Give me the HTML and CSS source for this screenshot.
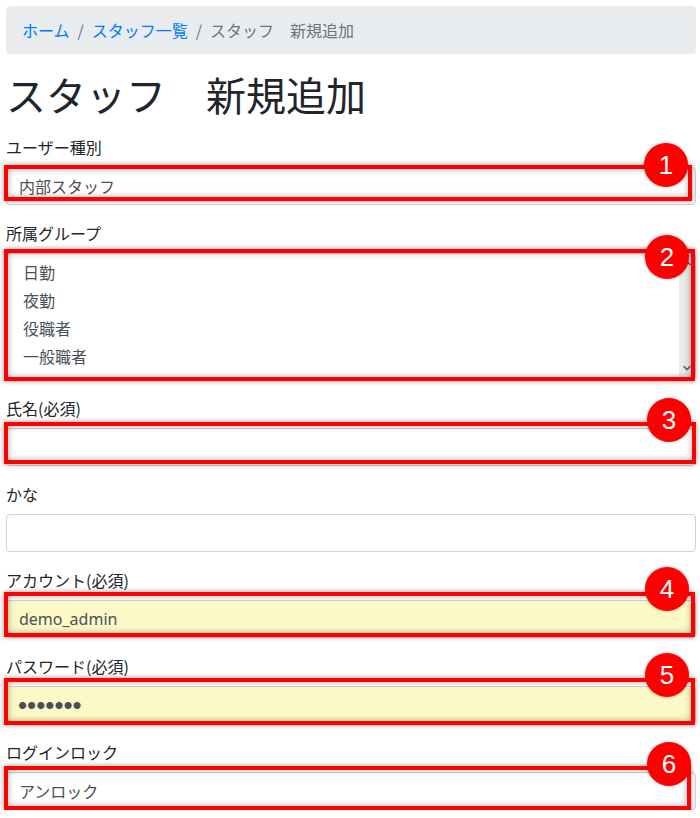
FILE: index.html
```html
<!DOCTYPE html>
<html lang="ja">
<head>
<meta charset="utf-8">
<title>スタッフ 新規追加</title>
<link rel="stylesheet" href="styles.css">
</head>
<body>
<nav class="breadcrumb">
  <a class="crumb-link" href="#">ホーム</a><span class="sep">/</span><a class="crumb-link" href="#">スタッフ一覧</a><span class="sep">/</span><span class="crumb-active">スタッフ　新規追加</span>
</nav>
<h1 class="title">スタッフ　新規追加</h1>
<form class="staff-form">
  <div class="field">
    <label class="label">ユーザー種別</label>
    <div class="control">
      <select class="input select"><option>内部スタッフ</option></select>
      <div class="mark mark-1"><span class="badge">1</span></div>
    </div>
  </div>
  <div class="field">
    <label class="label">所属グループ</label>
    <div class="control">
      <select class="input listbox" multiple size="4">
        <option>日勤</option>
        <option>夜勤</option>
        <option>役職者</option>
        <option>一般職者</option>
        <option>パート</option>
      </select>
      <div class="scrollbar" aria-hidden="true">
        <svg class="sb-arrow" width="16" height="14" viewBox="0 0 16 14"><path d="M4.5 9 L8 5.5 L11.5 9" fill="none" stroke="#606060" stroke-width="1.6"/></svg>
        <svg class="sb-arrow" width="16" height="14" viewBox="0 0 16 14"><path d="M4.5 5 L8 8.5 L11.5 5" fill="none" stroke="#606060" stroke-width="1.6"/></svg>
      </div>
      <div class="mark mark-2"><span class="badge">2</span></div>
    </div>
  </div>
  <div class="field">
    <label class="label">氏名(必須)</label>
    <div class="control">
      <input class="input" type="text">
      <div class="mark mark-3"><span class="badge">3</span></div>
    </div>
  </div>
  <div class="field">
    <label class="label">かな</label>
    <div class="control">
      <input class="input" type="text">
    </div>
  </div>
  <div class="field">
    <label class="label">アカウント(必須)</label>
    <div class="control">
      <input class="input autofill" type="text" value="demo_admin">
      <div class="mark mark-4"><span class="badge">4</span></div>
    </div>
  </div>
  <div class="field">
    <label class="label">パスワード(必須)</label>
    <div class="control">
      <input class="input autofill password" type="password" value="1234567">
      <div class="mark mark-5"><span class="badge">5</span></div>
    </div>
  </div>
  <div class="field">
    <label class="label">ログインロック</label>
    <div class="control">
      <select class="input select"><option>アンロック</option></select>
      <div class="mark mark-6"><span class="badge">6</span></div>
    </div>
  </div>
</form>
</body>
</html>
```
FILE: styles.css
```css
* { box-sizing: border-box; }
html, body { margin: 0; }
body {
  padding: 6px 4px 0 6px;
  background: #fff;
  color: #212529;
  font-family: "Noto Sans CJK JP", "Noto Sans", sans-serif;
  font-size: 16px;
  line-height: 24px;
  overflow: hidden;
}
.breadcrumb {
  display: flex;
  align-items: center;
  height: 48px;
  padding: 0 16px;
  margin-bottom: 16px;
  background: #e9ecef;
  border-radius: 4px;
  font-size: 16px;
}
.crumb-link { color: #007bff; text-decoration: none; }
.sep { color: #6c757d; padding: 0 8px; }
.crumb-active { color: #6c757d; }
.title {
  margin: 0 0 17px;
  font-size: 40px;
  line-height: 48px;
  font-weight: 400;
  color: #212529;
}
.staff-form { display: flex; flex-direction: column; gap: 16px; }
.field { display: flex; flex-direction: column; }
.label { display: block; margin-bottom: 8px; line-height: 24px; }
.control { position: relative; }
.input {
  display: block;
  width: 100%;
  height: 38px;
  padding: 6px 12px;
  font-family: "Noto Sans CJK JP", "Noto Sans", sans-serif;
  font-size: 16px;
  line-height: 24px;
  color: #495057;
  background: #fff;
  border: 1px solid #ced4da;
  border-radius: 4px;
  outline: none;
}
.select { appearance: none; -webkit-appearance: none; }
.listbox {
  height: 127px;
  padding: 4px 16px 4px 12px;
  overflow-y: hidden;
}
.listbox option { padding: 2px 4px; line-height: 24px; color: #495057; }
.scrollbar {
  position: absolute;
  top: 1px;
  bottom: 1px;
  right: 1px;
  width: 16px;
  background: linear-gradient(to right, #ececec, #e4e4e4);
  display: flex;
  flex-direction: column;
  justify-content: space-between;
  padding: 2px 0 4px;
}
.sb-arrow { display: block; }
.autofill { background: #fcf9c6; font-family: "Noto Sans", "Noto Sans CJK JP", sans-serif; }
.password { font-family: "Liberation Sans", Arial, sans-serif; font-size: 26px; letter-spacing: 0; padding-left: 11px; }
.mark {
  position: absolute;
  border: 4px solid #ff0000;
  box-shadow: 0 0 5px rgba(0,0,0,0.45), inset 0 0 6px rgba(0,0,0,0.35);
  pointer-events: none;
}
.badge {
  position: absolute;
  right: 2px;
  width: 44px;
  height: 44px;
  border-radius: 50%;
  background: #ff0000;
  color: #fff;
  font-family: "Liberation Sans", Arial, sans-serif;
  font-size: 26px;
  line-height: 44px;
  text-align: center;
  box-shadow: 0 0 3px rgba(0,0,0,0.35);
}
.mark-1 { top: -2px; bottom: 4px; left: -2px; right: 4px; }
.mark-1 .badge { top: -26px; right: 0; }
.mark-2 { top: -4px; bottom: -1px; left: -2px; right: 1px; }
.mark-2 .badge { top: -18px; right: 2px; }
.mark-3 { top: -6px; bottom: 2px; left: -2px; right: 0; }
.mark-3 .badge { top: -28px; right: 1px; }
.mark-4 { top: -8px; bottom: 1px; left: -2px; right: 1px; }
.mark-4 .badge { top: -29px; right: 2px; }
.mark-5 { top: -8px; bottom: -1px; left: -2px; right: 1px; }
.mark-5 .badge { top: -29px; right: 2px; }
.mark-6 { top: -6px; bottom: 0; left: -2px; right: 5px; }
.mark-6 .badge { top: -28px; right: -4px; }
```
